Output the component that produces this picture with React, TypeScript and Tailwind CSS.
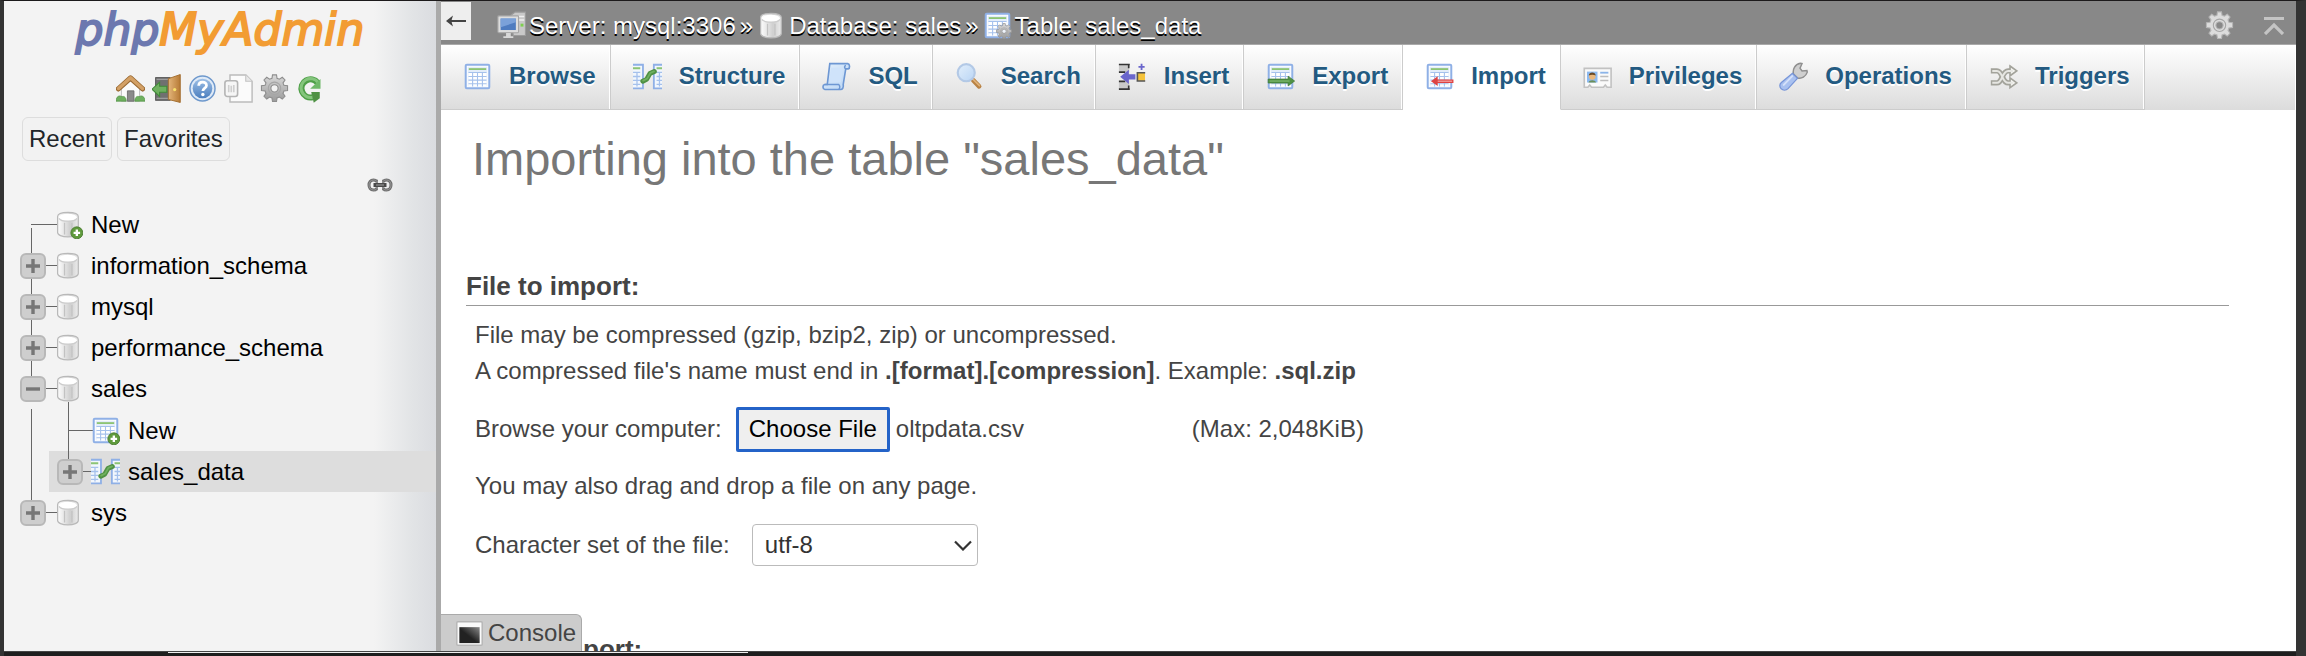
import { useRef, useState, type ReactNode } from "react";

type IconProps = { className?: string };

function Svg({ children, className = "size-[29px]" }: { children: ReactNode; className?: string }) {
  return (
    <svg viewBox="0 0 16 16" className={`shrink-0 ${className}`} aria-hidden="true" fill="none">
      {children}
    </svg>
  );
}

function Defs() {
  return (
    <svg className="absolute size-0" aria-hidden="true">
      <defs>
        <linearGradient id="cyl" x1="0" x2="1">
          <stop offset="0" stopColor="#fdfdfd" />
          <stop offset=".35" stopColor="#e4e4e4" />
          <stop offset=".6" stopColor="#cfcfcf" />
          <stop offset="1" stopColor="#ececec" />
        </linearGradient>
        <linearGradient id="wood" x1="0" x2="1">
          <stop offset="0" stopColor="#e3b57a" />
          <stop offset="1" stopColor="#b77a35" />
        </linearGradient>
        <linearGradient id="gearFill" x1="0" y1="0" x2="0" y2="1">
          <stop offset="0" stopColor="#d9d9d9" />
          <stop offset="1" stopColor="#9a9a9a" />
        </linearGradient>
        <linearGradient id="blueBall" x1="0" y1="0" x2="0" y2="1">
          <stop offset="0" stopColor="#9dbfe6" />
          <stop offset="1" stopColor="#4c7fbf" />
        </linearGradient>
        <linearGradient id="consoleFill" x1="0" y1="1" x2="1" y2="0">
          <stop offset=".45" stopColor="#222222" />
          <stop offset="1" stopColor="#8a8a8a" />
        </linearGradient>
        <linearGradient id="paper" x1="0" y1="0" x2="1" y2="1">
          <stop offset="0" stopColor="#e3effb" />
          <stop offset="1" stopColor="#b9d5f5" />
        </linearGradient>
      </defs>
    </svg>
  );
}

const TableGrid = () => (
  <>
    <rect x="1.5" y="1.5" width="13" height="13" rx=".6" fill="#fff" stroke="#8fb0e6" strokeWidth="1.1" />
    <rect x="2.6" y="2.6" width="10.8" height="10.8" fill="#e3edfa" />
    <path d="M3.2 3.9h9.6" stroke="#8cc474" strokeWidth="1" />
    <path d="M3 5.8h10v7.4H3z" fill="#fff" />
    <path d="M3 5.8h10M3 8h10M3 10h10M3 12h10M5.3 5.5v8M8 5.5v8M10.7 5.5v8" stroke="#a5c1ec" strokeWidth=".6" />
  </>
);

const PlusBadge = () => (
  <>
    <circle cx="12.6" cy="12.6" r="3.3" fill="#5f9a3c" stroke="#4a7c31" strokeWidth=".5" />
    <path d="M12.6 10.8v3.6M10.8 12.6h3.6" stroke="#fff" strokeWidth="1.3" />
  </>
);

const Cylinder = () => (
  <>
    <path
      d="M2 3.6C2 2.2 4.4 1.3 7.7 1.3s5.7.9 5.7 2.3v8.8c0 1.4-2.4 2.4-5.7 2.4S2 13.8 2 12.4z"
      fill="url(#cyl)"
      stroke="#b9b9b9"
      strokeWidth=".7"
    />
    <path d="M5.8 7v6.5M9.9 7v6.5" stroke="#c2c2c2" strokeWidth=".7" />
    <ellipse cx="7.7" cy="4" rx="4.9" ry="2" fill="#fff" />
    <path d="M2.8 4.6c.6 1 2.600 1.600 4.900 1.600s4.300-.6 4.900-1.600" stroke="#cdcdcd" strokeWidth=".7" />
  </>
);

const Gear = ({ fill = "url(#gearFill)", stroke = "#8d8d8d", hole = "#f3f3f3" }) => (
  <>
    <path
      d="M6.900.5h2.200l.3 1.900 1.300.5 1.600-1.100 1.500 1.500-1.100 1.600.5 1.300 2 .3v2.600l-2 .3-.5 1.300 1.100 1.600-1.500 1.500-1.600-1.100-1.300.5-.3 2H6.900l-.3-2-1.300-.5-1.600 1.100-1.500-1.500 1.100-1.600-.5-1.300-2-.3V6.500l2-.3.5-1.300-1.100-1.600 1.500-1.500 1.600 1.100 1.300-.5z"
      fill={fill}
      stroke={stroke}
      strokeWidth=".6"
    />
    <circle cx="8" cy="7.9" r="3.400" fill="none" stroke="#a6a6a6" strokeWidth=".6" />
    <circle cx="8" cy="7.9" r="2" fill={hole} stroke={stroke} strokeWidth=".6" />
  </>
);

const DbIcon = () => (
  <Svg>
    <Cylinder />
  </Svg>
);
const DbNewIcon = () => (
  <Svg>
    <Cylinder />
    <PlusBadge />
  </Svg>
);
const TableIcon = () => (
  <Svg>
    <TableGrid />
  </Svg>
);
const TableNewIcon = () => (
  <Svg>
    <TableGrid />
    <PlusBadge />
  </Svg>
);
const TableGearIcon = () => (
  <Svg>
    <TableGrid />
    <g transform="translate(7 6.600) scale(.58)">
      <Gear hole="#eef3fa" />
    </g>
  </Svg>
);
const StructureIcon = () => (
  <Svg>
    <path d="M0 1.500h5.500v13H0" fill="#f2f7fd" stroke="#8fb0e6" />
    <path d="M16 1.500h-4.500v13H16" fill="#f2f7fd" stroke="#8fb0e6" />
    <path d="M0 3.500h4M13 3.500h3" stroke="#8cc474" strokeWidth="1.100" />
    <path d="M0 5.700h4M0 8h4M0 10.200h4M0 12.300h4M13 5.700h3M13 8h3M13 10.200h3M13 12.300h3M2.200 5.500v8M14.600 5.500v8" stroke="#a5c1ec" strokeWidth=".7" />
    <path d="M5.400 10.600 7.500 9.600 9.300 6.400 11.800 5.300" stroke="#4f9144" strokeWidth="2.700" strokeLinecap="round" strokeLinejoin="round" />
    <path d="M5.600 10.300 7.800 9.200 9.600 6 11.600 5.200" stroke="#6fb05f" strokeWidth="1" strokeLinecap="round" />
  </Svg>
);
const SqlIcon = () => (
  <Svg>
    <path d="M4.300.9h9.900c1.200.2 1.400 2.600.2 2.900h-1.300l-1.400 8.600c.3 1.500-.3 2.800-1.500 2.800H1.600C.2 14.900.2 12.700 1.500 12.400h1.400z" fill="url(#paper)" stroke="#6d97d3" strokeWidth=".9" />
    <path d="M13.100 3.700c-.9-.3-.9-1.500.1-1.800M1.500 12.400h7.600c.9.5.9 2 .2 2.700" stroke="#6d97d3" strokeWidth=".8" />
    <path d="M5 3.200h6.700l-1.300 8H3.900z" fill="#cfe3fa" />
  </Svg>
);
const SearchIcon = () => (
  <Svg>
    <path d="m10 10 3.300 3.400" stroke="#b98345" strokeWidth="2.600" strokeLinecap="round" />
    <path d="m10 9.600 3.500 3.400" stroke="#dfb27a" strokeWidth=".9" strokeLinecap="round" />
    <circle cx="6.200" cy="5.900" r="4.700" fill="url(#paper)" stroke="#b3c9e6" strokeWidth="1.200" />
  </Svg>
);
const InsertIcon = () => (
  <Svg>
    <path d="M.5 1.300h5.700v4.200H.5zM.5 10.800h5.700v4.200H.5z" fill="#c9c9c9" />
    <path d="M.5 1.400h6M.5 5.600h3.500M.5 10.700h3.500M.5 15h6M5.900 1.400v2M5.900 13v2" stroke="#333" strokeWidth=".9" />
    <path d="M1.200 8.200 6 4.300v2.500h3.600v2.800H6v2.500z" fill="#6a66cc" />
    <rect x="10.900" y="6" width="4" height="4.400" fill="#f5c33b" />
    <path d="M15 5.900h-4.300v4.600H15" stroke="#555" strokeWidth=".9" />
    <path d="M13 1v3.400M11.300 2.700h3.400" stroke="#6a66cc" strokeWidth="1" />
  </Svg>
);
const ExportIcon = () => (
  <Svg>
    <TableGrid />
    <path d="M1.200 9.400h11V7.800l3.600 2.700-3.600 2.700v-1.600h-11z" fill="#4f9144" stroke="#3f7a36" strokeWidth=".4" />
    <path d="M2 10.500h11" stroke="#86bf74" strokeWidth=".6" />
  </Svg>
);
const ImportIcon = () => (
  <Svg>
    <TableGrid />
    <path d="M15.700 9.600H7V7.900l-3.700 2.700L7 13.300v-1.700h8.700z" fill="#de4343" />
    <path d="M15 10.600H7" stroke="#f4a0a0" strokeWidth=".7" />
  </Svg>
);
const PrivilegesIcon = () => (
  <Svg>
    <path d="M.7 3.500h14.800v10.400h-2.200l-1-1.200-1 1.200H4.700l-1-1.200-1 1.200H.7z" fill="#fafafa" stroke="#c2c2c2" strokeWidth=".9" />
    <rect x="2.200" y="5.300" width="5.800" height="6" fill="#8dbaf0" />
    <circle cx="5.100" cy="8" r="1.800" fill="#e9b77c" />
    <path d="M3.200 7.500c0-2.300 3.800-2.300 3.800 0-1-.7-2.800-.7-3.800 0" fill="#6b4a25" />
    <path d="M3 11.300c.4-1.700 3.800-1.700 4.200 0z" fill="#6b8f5a" />
    <path d="M9.500 5.900h4.500" stroke="#8bb4e8" strokeWidth="1" />
    <path d="M9.500 8h4.500M9.500 10.200h4.500" stroke="#bdbdbd" strokeWidth=".9" />
  </Svg>
);
const WrenchIcon = () => (
  <Svg>
    <path d="M8 6.600c-.6-2.500.7-5.300 3.800-5.900l.9.200-1.100 2.500 1.100 1.500 2.700-.2.200.9c-.8 2.600-3.200 3.700-5.300 3.200z" fill="#cfcfcf" stroke="#8f8f8f" strokeWidth=".8" />
    <path d="M7.400 6.200 10.200 9 5 14.700c-1.100 1-2.800 1-3.800.1-1-1-1-2.600.1-3.500z" fill="#a9c1f0" stroke="#7795d8" strokeWidth=".7" />
    <path d="M7.300 7.800 2.600 12.600" stroke="#d5e1fa" strokeWidth="1.100" strokeLinecap="round" />
  </Svg>
);
const TriggersIcon = () => (
  <Svg>
    <path d="M1 4.900h3.400c3.200 0 2.600 6.600 6.200 6.600h2.200M1 11.500h3.400c3.200 0 2.600-6.600 6.200-6.600h2.200" stroke="#a3a39b" strokeWidth="3" />
    <path d="M11.600 2.200 15.300 4.900 11.600 7.600zM11.600 8.800l3.700 2.700-3.700 2.700z" fill="#f3f3ef" stroke="#a3a39b" strokeWidth=".9" />
    <path d="M1.800 4.900h2.600c3.200 0 2.600 6.600 6.200 6.600h2.500M1.800 11.500h2.600c3.200 0 2.600-6.600 6.200-6.600h2.500" stroke="#e6e6e2" strokeWidth="1.100" />
  </Svg>
);
const ServerIcon = () => (
  <Svg>
    <path d="M7.500 2.500 10 .6h5.700v12.900H9z" fill="#c9c9c9" stroke="#9b9b9b" strokeWidth=".6" />
    <path d="M12 3h3M12 5h3" stroke="#efefef" strokeWidth=".8" />
    <rect x="13" y="7" width="1.600" height="1.600" fill="#7ed04f" />
    <rect x=".5" y="2.700" width="11.400" height="9.300" rx=".5" fill="#ddd" stroke="#a5a5a5" strokeWidth=".6" />
    <rect x="2" y="4.200" width="8.400" height="6.300" fill="#4f7cc0" />
    <path d="M2 4.200h8.400v2L2 9z" fill="#7ba1d9" />
    <path d="M5 12.200h2.600v1.700H9v1H3.500v-1H5z" fill="#d8d8d8" />
  </Svg>
);
const HomeIcon = () => (
  <Svg>
    <path d="M3 8 8 3.300 13 8v7H3z" fill="#fbfbfb" stroke="#bdbdbd" strokeWidth=".5" />
    <path d="M6.300 9.300h3.600V15H6.300z" fill="#8b8b8b" stroke="#6d6d6d" strokeWidth=".5" />
    <path d="M1.300 8.200 8 2.200l6.700 6" stroke="#9a6a33" strokeWidth="2.900" strokeLinejoin="round" strokeLinecap="round" />
    <path d="M1.400 8 8 2.100l6.600 5.900" stroke="#d3a065" strokeWidth="1.900" strokeLinejoin="round" strokeLinecap="round" />
    <path d="M0 15c0-2.500 1.800-3.500 3.200-2.500C4.600 11.900 5.700 13.200 5.600 15zM10.400 15c-.1-1.800 1-3.100 2.400-2.500 1.400-1 3.200 0 3.200 2.500z" fill="#6fb05f" stroke="#4f9144" strokeWidth=".4" />
  </Svg>
);
const ExitIcon = () => (
  <Svg>
    <rect x="2" y="2" width="8" height="12.500" fill="#707070" stroke="#4f4f4f" strokeWidth=".5" />
    <path d="M2.500 3h7M2.500 13.500h7" stroke="#9c9c9c" strokeWidth=".7" />
    <path d="M0 8.400 4.200 4.500v2.300h4v3.300h-4v2.300z" fill="#6fb05f" stroke="#3f8a37" strokeWidth=".6" />
    <path d="M9 2.600 15.600.3v15.400L9 14z" fill="url(#wood)" stroke="#a06a2b" strokeWidth=".5" />
    <circle cx="12.500" cy="8.600" r=".9" fill="#f7e06a" />
  </Svg>
);
const HelpIcon = () => (
  <Svg>
    <circle cx="8" cy="8" r="6.900" fill="#dfeaf7" stroke="#6e98cc" strokeWidth=".8" />
    <circle cx="8" cy="8" r="5.400" fill="url(#blueBall)" />
    <path d="M5.900 6.500c0-2.700 4.300-2.700 4.300-.2 0 1.500-2 1.500-2 3.100" stroke="#fff" strokeWidth="1.500" />
    <circle cx="8.200" cy="11.300" r=".95" fill="#fff" />
  </Svg>
);
const DocsIcon = () => (
  <Svg>
    <path d="M3.300.6h8.800l3.400 3.400v11.400H3.300z" fill="#fbfbfb" stroke="#bcbcbc" strokeWidth=".8" />
    <path d="M12 .6V4h3.500" fill="#e8e8e8" stroke="#c4c4c4" strokeWidth=".6" />
    <rect x=".5" y="3.700" width="7" height="8.700" rx="1.300" fill="#f6f6f6" stroke="#b5b5b5" strokeWidth=".9" />
    <path d="M2.600 6v4M4 6.500v3.500M5.400 6v4" stroke="#cfcfcf" strokeWidth=".9" />
  </Svg>
);
const GearIcon = ({ className }: IconProps) => (
  <Svg className={className}>
    <Gear />
  </Svg>
);
const ReloadIcon = () => (
  <Svg>
    <path d="M12 4.900A5 5 0 1 0 9.200 12.800" stroke="#4f9f48" strokeWidth="3.400" />
    <path d="M12.200 4.700A5.200 5.200 0 1 0 9.200 12.800" stroke="#84c57c" strokeWidth="1.700" />
    <path d="M13.500 2.800v5.400H7.800z" fill="#6fb868" />
    <path d="M8.400 9.900h4.700v3.500L9.800 15.900z" fill="#4f9144" />
  </Svg>
);
const LinkIcon = () => (
  <svg viewBox="0 0 26 14" className="h-[14px] w-[26px]" fill="none" aria-hidden="true">
    <path d="M11 3.200H9.500C8.800 2.200 7.800 2 6.500 2 3.500 2 2 4.300 2 7s1.500 5 4.500 5c1.300 0 2.300-.2 3-1.200H11M15 3.200h1.500c.7-1 1.700-1.200 3-1.200 3 0 4.500 2.300 4.500 5s-1.500 5-4.500 5c-1.300 0-2.300-.2-3-1.200H15" stroke="#6d6d6d" strokeWidth="3" />
    <path d="M11 3.200H9.500C8.800 2.200 7.800 2 6.500 2 3.500 2 2 4.300 2 7s1.500 5 4.500 5c1.300 0 2.300-.2 3-1.200H11M15 3.200h1.500c.7-1 1.700-1.200 3-1.200 3 0 4.500 2.300 4.500 5s-1.500 5-4.500 5c-1.300 0-2.300-.2-3-1.200H15" stroke="#a0a0a0" strokeWidth=".8" />
    <path d="M6.500 7h13" stroke="#4a4a4a" strokeWidth="4" />
    <path d="M9 7h8" stroke="#aaa" strokeWidth=".9" />
  </svg>
);
const ConsoleIcon = () => (
  <Svg>
    <rect x="1" y="1.500" width="14" height="13" rx=".6" fill="#fafafa" stroke="#b5b5b5" strokeWidth=".8" />
    <rect x="2.400" y="4.500" width="11.200" height="8.800" fill="url(#consoleFill)" />
  </Svg>
);

function Expander({ open = false, name }: { open?: boolean; name: string }) {
  return (
    <button
      type="button"
      aria-label={`${open ? "Collapse" : "Expand"} ${name}`}
      className="relative grid size-[26px] shrink-0 place-items-center rounded-md border-2 border-[#b8b8b8] bg-[#cecece]"
    >
      <svg viewBox="0 0 16 16" className="size-4" aria-hidden="true">
        <path d={open ? "M1 8h14" : "M1 8h14M8 1v14"} stroke="#777" strokeWidth="3.400" />
      </svg>
    </button>
  );
}

function TreeRow({
  name,
  icon,
  open,
  leaf = false,
  line,
}: {
  name: string;
  icon: ReactNode;
  open?: boolean;
  leaf?: boolean;
  line: string;
}) {
  return (
    <div className="flex h-[41px] items-center">
      <div className="relative flex h-full w-[26px] shrink-0 items-center">
        <span className={`absolute left-[11px] w-px bg-[#666] ${line}`} />
        {leaf ? <span className="ml-[11px] h-px w-[15px] bg-[#666]" /> : <Expander open={open} name={name} />}
      </div>
      <span className="-mr-[3px] h-px w-[11px] shrink-0 bg-[#666]" />
      <a href="#" className="flex items-center gap-2 text-black">
        {icon}
        {name}
      </a>
    </div>
  );
}

const tabs = [
  { label: "Browse", icon: <TableIcon /> },
  { label: "Structure", icon: <StructureIcon /> },
  { label: "SQL", icon: <SqlIcon /> },
  { label: "Search", icon: <SearchIcon /> },
  { label: "Insert", icon: <InsertIcon /> },
  { label: "Export", icon: <ExportIcon /> },
  { label: "Import", icon: <ImportIcon />, active: true },
  { label: "Privileges", icon: <PrivilegesIcon /> },
  { label: "Operations", icon: <WrenchIcon /> },
  { label: "Triggers", icon: <TriggersIcon /> },
];

const tools = [
  { label: "Home", icon: <HomeIcon /> },
  { label: "Log out", icon: <ExitIcon /> },
  { label: "phpMyAdmin documentation", icon: <HelpIcon /> },
  { label: "MySQL documentation", icon: <DocsIcon /> },
  { label: "Navigation panel settings", icon: <GearIcon /> },
  { label: "Reload navigation panel", icon: <ReloadIcon /> },
];

function Sidebar() {
  return (
    <aside className="w-[437px] shrink-0 border-r-[5px] border-[#aaa] bg-[linear-gradient(to_left,#dadce0,#e2e4e6_24px,#f3f3f3_62px)]">
      <div className="flex h-[69px] justify-center">
        <a href="#" className="font-['DejaVu_Sans'] text-[44px] leading-[58px] italic">
          <span className="text-[#6c78af] [-webkit-text-stroke:2px_#6c78af]">php</span>
          <span className="text-[#f29c33] [-webkit-text-stroke:2px_#f29c33]">MyAdmin</span>
        </a>
      </div>
      <div className="flex justify-center gap-[7px] pt-1">
        {tools.map((t) => (
          <a key={t.label} href="#" aria-label={t.label}>
            {t.icon}
          </a>
        ))}
      </div>
      <div className="mt-[14px] flex gap-[5px] pl-[18px]">
        {["Recent", "Favorites"].map((b) => (
          <button key={b} type="button" className="h-11 rounded-md border border-[#ddd] bg-[#f2f2f2] px-[6px] text-[#212529]">
            {b}
          </button>
        ))}
      </div>
      <div className="flex h-[43px] items-center justify-end pt-4 pr-[43px] pb-3">
        <button type="button" aria-label="Link with main panel">
          <LinkIcon />
        </button>
      </div>
      <nav aria-label="Databases">
        <div className="pl-4">
          <TreeRow name="New" icon={<DbNewIcon />} leaf line="top-6 bottom-0" />
          <TreeRow name="information_schema" icon={<DbIcon />} line="inset-y-0" />
          <TreeRow name="mysql" icon={<DbIcon />} line="inset-y-0" />
          <TreeRow name="performance_schema" icon={<DbIcon />} line="inset-y-0" />
          <TreeRow name="sales" icon={<DbIcon />} open line="top-0 bottom-2" />
        </div>
        <div className="relative pt-px pl-[45px]">
          <span className="absolute inset-y-0 left-[27px] w-px bg-[#666]" />
          <div className="pl-2">
            <TreeRow name="New" icon={<TableNewIcon />} leaf line="-top-2 bottom-0" />
          </div>
          <div className="bg-[#ddd] pl-2">
            <TreeRow name="sales_data" icon={<StructureIcon />} line="top-0 bottom-5" />
          </div>
        </div>
        <div className="pl-4">
          <TreeRow name="sys" icon={<DbIcon />} line="top-0 bottom-5" />
        </div>
      </nav>
    </aside>
  );
}

function Header() {
  return (
    <header className="flex h-11 shrink-0 items-center border-b border-[#aaa] bg-[#888] text-white [text-shadow:0_2px_0_#000]">
      <button type="button" aria-label="Hide navigation panel" className="mb-[3px] grid h-[38px] w-[30px] place-items-center bg-[#eee]">
        <svg viewBox="0 0 20 12" className="h-3 w-5" aria-hidden="true">
          <path d="M0 6 7 .5 5.600 5H20v2H5.600L7 11.500z" fill="#444" />
        </svg>
      </button>
      <nav aria-label="Breadcrumb" className="ml-[26px] flex flex-1 items-center gap-[3px] pt-[6px]">
        <ServerIcon />
        <a href="#">Server: mysql:3306</a>
        <span className="mx-px">»</span>
        <DbIcon />
        <a href="#">Database: sales</a>
        <span className="mx-px">»</span>
        <TableGearIcon />
        <a href="#">Table: sales_data</a>
      </nav>
      <button type="button" aria-label="Page settings" className="mt-[6px] mr-[30px]">
        <Svg>
          <Gear fill="#dcdcdc" stroke="#b5b5b5" hole="#888" />
        </Svg>
      </button>
      <button type="button" aria-label="Scroll to top" className="mt-[6px] mr-3">
        <svg viewBox="0 0 20 18" className="h-[18px] w-5" fill="none" aria-hidden="true">
          <path d="M0 1.500h20M1 17l9-9 9 9" stroke="#c4c4c4" strokeWidth="3.200" />
        </svg>
      </button>
    </header>
  );
}

export default function App() {
  const fileRef = useRef<HTMLInputElement>(null);
  const [file, setFile] = useState("oltpdata.csv");

  return (
    <div className="flex h-screen flex-col overflow-hidden border-t border-r-[10px] border-l-4 border-t-[#1c1a1b] border-r-[#333] border-l-[#333] bg-white font-['Liberation_Sans',Arial,sans-serif] text-2xl leading-9 text-[#444]">
      <Defs />
      <div className="flex min-h-0 flex-1">
        <Sidebar />
        <div className="relative flex min-w-0 flex-1 flex-col">
          <Header />
          <nav aria-label="Table" className="mr-px flex h-[65px] shrink-0 bg-linear-to-b from-white to-[#dcdcdc]">
            {tabs.map((t) => (
              <a
                key={t.label}
                href="#"
                aria-current={t.active ? "page" : undefined}
                className={`flex items-center gap-[17px] border-r border-b border-r-[#ccc] pr-[14px] pb-[2px] pl-[22px] font-bold text-[#235a81] [text-shadow:0_2px_0_#fff] ${
                  t.active ? "border-b-white bg-white" : "border-b-[#ccc] shadow-[inset_-1px_0_0_#fff]"
                }`}
              >
                {t.icon}
                {t.label}
              </a>
            ))}
          </nav>
          <main className="min-h-0 flex-1 overflow-hidden pr-[67px] pl-[25px]">
            <h1 className="pt-[19px] pl-[6px] text-[47px] leading-[60px] text-[#777]">Importing into the table "sales_data"</h1>
            <h2 className="mt-[78px] border-b border-[#999] text-[26px] leading-[38px] font-bold">File to import:</h2>
            <div className="pt-[11px] pl-[9px]">
              <p>File may be compressed (gzip, bzip2, zip) or uncompressed.</p>
              <p>
                A compressed file's name must end in <b>.[format].[compression]</b>. Example: <b>.sql.zip</b>
              </p>
              <div className="mt-[15px] flex h-[50px] items-center">
                <label htmlFor="import-file">Browse your computer:</label>
                <input
                  ref={fileRef}
                  id="import-file"
                  type="file"
                  className="hidden"
                  onChange={(e) => setFile(e.target.files?.[0]?.name ?? "")}
                />
                <button
                  type="button"
                  onClick={() => fileRef.current?.click()}
                  className="mr-[6px] ml-[14px] h-[45px] rounded-xs border-3 border-[#2463c8] bg-[#efefef] px-[10px] text-black"
                >
                  Choose File
                </button>
                <span className="w-[296px]">{file}</span>
                <span>(Max: 2,048KiB)</span>
              </div>
              <p className="mt-[14px]">You may also drag and drop a file on any page.</p>
              <div className="mt-5 flex h-[42px] items-center">
                <label htmlFor="charset">Character set of the file:</label>
                <div className="relative ml-[22px]">
                  <select
                    id="charset"
                    defaultValue="utf-8"
                    className="h-[42px] w-[226px] appearance-none rounded-[4px] border border-[#bbb] bg-white pl-3 text-[#333]"
                  >
                    <option>utf-8</option>
                    <option>iso-8859-1</option>
                  </select>
                  <svg viewBox="0 0 18 11" className="pointer-events-none absolute top-4 right-[6px] h-[11px] w-[18px]" fill="none" aria-hidden="true">
                    <path d="m1 1.500 8 8 8-8" stroke="#333" strokeWidth="2.200" />
                  </svg>
                </div>
              </div>
            </div>
            <h2 className="mt-16 border-b border-[#999] text-[26px] leading-[38px] font-bold">Partial import:</h2>
          </main>
          <button
            type="button"
            className="absolute bottom-0 left-0 flex h-[37px] items-center gap-1 rounded-tr-md border-t border-r border-[#aaa] bg-[#ccc] pr-[5px] pl-[14px]"
          >
            <ConsoleIcon />
            Console
          </button>
        </div>
      </div>
      <div className="h-[5px] shrink-0 border-t border-[#444] bg-[#1e1e1e]">
        <div className="ml-[164px] h-px w-[580px] bg-[#eee]" />
      </div>
    </div>
  );
}
